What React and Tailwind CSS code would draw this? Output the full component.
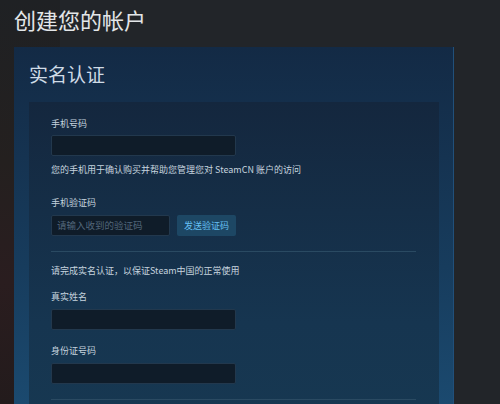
export default function App() {
  const font = { fontFamily: '"Noto Sans CJK SC", "Noto Sans", sans-serif' };
  const label = "text-[9px] leading-[12px] text-[#c6d4df]";
  const input = "h-[21px] bg-[#0f1c29] border border-[#22384d] rounded-[2px]";
  return (
    <div
      style={font}
      className="relative w-[500px] h-[404px] overflow-hidden bg-[#222529]"
    >
      <div className="absolute left-0 top-0 w-[60px] h-[404px] bg-[linear-gradient(180deg,#1f2124_0%,#24201f_40%,#2a1d1f_70%,#231b1c_100%)]" />
      <div className="relative pl-[14px] pt-[6px]">
        <div className="text-[22px] leading-[26px] text-[#e3e6e8]">创建您的帐户</div>
        <div className="mt-[15px] w-[440px] h-[400px] bg-[linear-gradient(180deg,#132a45_0%,#173c5d_55%,#1c4e75_100%)] border-r border-[#21507a] pl-[15px] pr-[14px] pt-[15px]">
          <div className="text-[19px] leading-[24px] text-[#cfdbe6]">实名认证</div>
          <div className="mt-[16px] h-[400px] bg-[linear-gradient(180deg,#14273e_0%,#163550_55%,#173a52_100%)] pl-[22px] pr-[23px] pt-[16px]">
            <div className={label}>手机号码</div>
            <div className={`mt-[5px] w-[185px] ${input}`} />
            <div className={`mt-[8px] ${label}`}>您的手机用于确认购买并帮助您管理您对 SteamCN 账户的访问</div>
            <div className={`mt-[21px] ${label}`}>手机验证码</div>
            <div className="mt-[6px] flex gap-[7px]">
              <div className={`w-[119px] ${input} flex items-center pl-[5px] text-[9.5px] text-[#52667a]`}>请输入收到的验证码</div>
              <div className="w-[59px] h-[21px] bg-[#1d4764] rounded-[2px] flex items-center justify-center text-[9px] text-[#66c0f4]">发送验证码</div>
            </div>
            <div className="mt-[15px] h-px bg-[#2a4a62]" />
            <div className={`mt-[13px] ${label}`}>请完成实名认证，以保证Steam中国的正常使用</div>
            <div className={`mt-[14px] ${label}`}>真实姓名</div>
            <div className={`mt-[6px] w-[185px] ${input}`} />
            <div className={`mt-[15px] ${label}`}>身份证号码</div>
            <div className={`mt-[6px] w-[185px] ${input}`} />
            <div className="mt-[15px] h-px bg-[#2a4a62]" />
          </div>
        </div>
      </div>
    </div>
  );
}
